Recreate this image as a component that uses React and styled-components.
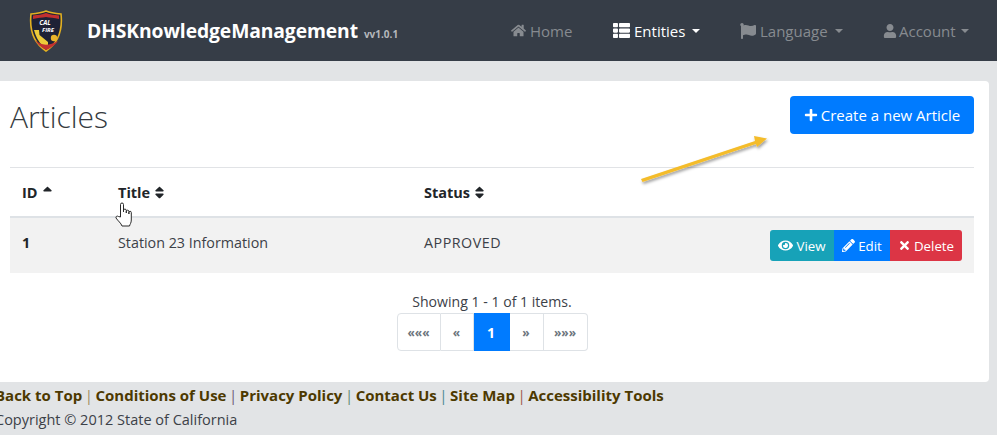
import React from 'react';
import styled, { createGlobalStyle } from 'styled-components';
import { FaHome, FaThList, FaFlag, FaUser, FaPlus, FaEye, FaPencilAlt, FaTimes, FaSort, FaSortUp } from 'react-icons/fa';

const GlobalStyle = createGlobalStyle`
  html, body {
    margin: 0;
    padding: 0;
    width: 997px;
    height: 435px;
    overflow: hidden;
    background: #e2e4e6;
    font-family: "Open Sans", "Noto Sans", sans-serif;
    font-size: 14px;
    color: #212529;
  }
  svg { display: block; }
`;

const Navbar = styled.nav`
  height: 61px;
  background: #363d47;
  display: flex;
  align-items: center;
  padding-left: 29px;
`;

const Brand = styled.div`
  display: flex;
  align-items: center;
  gap: 24px;
  color: #fff;
`;

const BrandName = styled.span`
  font-size: 19.3px;
  font-weight: 700;
  letter-spacing: -0.1px;
`;

const Version = styled.span`
  font-size: 10px;
  font-weight: 700;
  letter-spacing: 0;
  color: #b5b8bc;
  margin-left: 6px;
`;

const NavLinks = styled.div`
  margin-left: auto;
  display: flex;
  align-items: center;
`;

const NavLink = styled.a`
  display: flex;
  align-items: center;
  gap: ${p => p.$gap || 4}px;
  width: ${p => p.$width}px;
  font-size: 15px;
  color: ${p => (p.$active ? '#fff' : '#878b90')};
`;

const Caret = styled.span`
  width: 0;
  height: 0;
  margin-left: 3px;
  border-top: 4px solid currentColor;
  border-left: 4px solid transparent;
  border-right: 4px solid transparent;
`;

const Main = styled.main`
  margin: 20px 8px 0 -10px;
  height: 301px;
  box-sizing: border-box;
  background: #fff;
  border-radius: 4px;
  padding: 15px 15px 0 20px;
  position: relative;
`;

const Header = styled.div`
  display: flex;
  justify-content: space-between;
  align-items: flex-start;
  height: 71px;
  border-bottom: 1px solid #e1e3e6;
`;

const Title = styled.h2`
  margin: 2px 0 0;
  font-size: 30px;
  font-weight: 300;
  line-height: 38px;
  color: #343a40;
`;

const CreateButton = styled.button`
  height: 38px;
  width: 184px;
  display: flex;
  align-items: center;
  justify-content: center;
  gap: 3px;
  border: 0;
  border-radius: 4px;
  background: #007bff;
  color: #fff;
  font-family: inherit;
  font-size: 15px;
`;

const Table = styled.div`
  font-size: 14.3px;
`;

const Row = styled.div`
  display: grid;
  grid-template-columns: 96px 306px 1fr;
  align-items: center;
  padding-left: 12px;
  height: ${p => (p.$head ? 48 : 55)}px;
  background: ${p => (p.$head ? '#fff' : '#f2f2f2')};
  border-bottom: ${p => (p.$head ? '2px solid #dee2e6' : '0')};
`;

const HeadCell = styled.div`
  display: flex;
  align-items: center;
  gap: 2px;
  font-weight: 700;
  font-size: 14.5px;
`;

const Cell = styled.div`
  padding-bottom: 6px;
  font-weight: ${p => (p.$bold ? 700 : 400)};
  letter-spacing: ${p => (p.$caps ? '0.5px' : '0')};
  color: ${p => (p.$bold ? '#212529' : '#3c4148')};
`;

const RowEnd = styled.div`
  display: flex;
  align-items: center;
  justify-content: space-between;
  padding-right: 12px;
`;

const ButtonGroup = styled.div`
  display: flex;
  border-radius: 3px;
  overflow: hidden;
`;

const SmallButton = styled.button`
  height: 31px;
  width: ${p => p.$width}px;
  display: flex;
  align-items: center;
  justify-content: center;
  gap: 3px;
  border: 0;
  padding: 0;
  background: ${p => p.$bg};
  color: #fff;
  font-family: inherit;
  font-size: 13.3px;
`;

const Showing = styled.div`
  margin-top: 18px;
  text-align: center;
  font-size: 14.1px;
  line-height: 22px;
  color: #3c4148;
`;

const Pagination = styled.div`
  display: flex;
  justify-content: center;
`;

const PageItem = styled.a`
  box-sizing: border-box;
  height: 38px;
  width: ${p => p.$width}px;
  display: flex;
  align-items: center;
  justify-content: center;
  font-size: ${p => (p.$active ? 14 : 12)}px;
  font-weight: 700;
  color: ${p => (p.$active ? '#fff' : '#6c757d')};
  background: ${p => (p.$active ? '#007bff' : '#fff')};
  border: 1px solid ${p => (p.$active ? '#007bff' : '#dee2e6')};
  border-left-width: ${p => (p.$first ? 1 : 0)}px;
  border-radius: ${p => (p.$first ? '4px 0 0 4px' : p.$last ? '0 4px 4px 0' : '0')};
`;

const Arrow = styled.svg`
  position: absolute;
  left: 648px;
  top: 50px;
`;

const Pointer = styled.svg`
  position: absolute;
  left: 125px;
  top: 121px;
`;

const Footer = styled.footer`
  margin-left: -5px;
  padding-top: 1px;
  font-size: 15px;
  line-height: 24px;
  color: #3c4148;
`;

const FooterLinks = styled.div`
  display: flex;
  gap: 2.5px;
`;

const FooterLink = styled.a`
  font-weight: 700;
  color: #4d3900;
`;

const Separator = styled.span`
  color: ${p => p.$color};
  font-weight: 400;
`;

const Copyright = styled.div`
  margin-top: 1px;
  font-size: 14.5px;
  font-weight: 400;
`;

function Logo() {
  return (
    <svg width="34" height="42" viewBox="0 0 34 42">
      <path d="M17 1 C22 3 27 3.5 32 4 C33.5 18 31 32 17 41 C3 32 0.5 18 2 4 C7 3.5 12 3 17 1 Z" fill="#1e2236" stroke="#e2b021" strokeWidth="1.6" />
      <path d="M4 5.5 C9 5 13 4.5 17 3 C21 4.5 25 5 30 5.5 L30 9 C25 8 21 7.5 17 7 C13 7.5 9 8 4 9 Z" fill="#c2302f" />
      <path d="M5 20 L10 20 L10.5 25 L19 32 L19 36 L14 36 C9 31 7 27 5 20 Z" fill="#eccb3a" />
      <path d="M6 30 C12 36 20 36 29 31 C27 34 22 38 17 40 C12 37 8 34 6 30 Z" fill="#c2302f" />
      <circle cx="25" cy="28" r="3.2" fill="#ecb52b" />
      <text x="16" y="15" textAnchor="middle" fontSize="6.5" fontWeight="700" fontStyle="italic" fill="#fff">CAL</text>
      <text x="19" y="21.5" textAnchor="middle" fontSize="6" fontWeight="700" fontStyle="italic" fill="#fff">FIRE</text>
    </svg>
  );
}

const pages = [
  { label: '«««', width: 44, first: true },
  { label: '«', width: 33 },
  { label: '1', width: 36, active: true },
  { label: '»', width: 34 },
  { label: '»»»', width: 44, last: true },
];

const footerLinks = ['Back to Top', 'Conditions of Use', 'Privacy Policy', 'Contact Us', 'Site Map', 'Accessibility Tools'];
const separatorColors = ['#a08c5a', '#6c5a78', '#5f8a70', '#4b8a94', '#a05a50'];

function App() {
  return (
    <>
      <GlobalStyle />
      <Navbar>
        <Brand>
          <Logo />
          <BrandName>
            DHSKnowledgeManagement<Version>vv1.0.1</Version>
          </BrandName>
        </Brand>
        <NavLinks>
          <NavLink $width={102}><FaHome size={15} /> Home</NavLink>
          <NavLink $width={127} $active><FaThList size={17} /> Entities <Caret /></NavLink>
          <NavLink $width={143}><FaFlag size={16} /> Language <Caret /></NavLink>
          <NavLink $width={114} $gap={2}><FaUser size={14} /> Account <Caret /></NavLink>
        </NavLinks>
      </Navbar>

      <Main>
        <Header>
          <Title>Articles</Title>
          <CreateButton><FaPlus size={14} /> Create a new Article</CreateButton>
        </Header>
        <Table>
          <Row $head>
            <HeadCell>ID <FaSortUp size={15} /></HeadCell>
            <HeadCell>Title <FaSort size={15} /></HeadCell>
            <HeadCell>Status <FaSort size={15} /></HeadCell>
          </Row>
          <Row>
            <Cell $bold>1</Cell>
            <Cell>Station 23 Information</Cell>
            <RowEnd>
              <Cell $caps>APPROVED</Cell>
              <ButtonGroup>
                <SmallButton $bg="#17a2b8" $width={64}><FaEye size={15} /> View</SmallButton>
                <SmallButton $bg="#007bff" $width={56}><FaPencilAlt size={13} /> Edit</SmallButton>
                <SmallButton $bg="#dc3545" $width={72}><FaTimes size={13} /> Delete</SmallButton>
              </ButtonGroup>
            </RowEnd>
          </Row>
        </Table>
        <Showing>Showing 1 - 1 of 1 items.</Showing>
        <Pagination>
          {pages.map(page => (
            <PageItem key={page.label} $width={page.width} $active={page.active} $first={page.first} $last={page.last}>
              {page.label}
            </PageItem>
          ))}
        </Pagination>
        <Arrow width="136" height="60" viewBox="0 0 136 60">
          <defs>
            <filter id="arrowShadow" x="-10%" y="-30%" width="130%" height="180%">
              <feDropShadow dx="1" dy="2" stdDeviation="1.5" floodColor="#000" floodOpacity="0.4" />
            </filter>
          </defs>
          <path d="M3 48 L117 10 L116 5 L129 7.5 L119 16 L118 13 L4.5 51 Z" fill="#f4bc2a" filter="url(#arrowShadow)" />
        </Arrow>
        <Pointer width="18" height="26" viewBox="0 0 18 26">
          <path
            d="M5.5 15 V2.5 a1.5 1.5 0 0 1 3 0 V10 V8.5 a1.4 1.4 0 0 1 2.8 0 V11 V9.5 a1.3 1.3 0 0 1 2.6 0 V12 V10.5 a1.2 1.2 0 0 1 2.4 0 V18 C16.3 21 15 22 14.5 24 H7 C6 21 3 19 1 16 C0.5 14.5 2 13.5 3.5 14.5 Z"
            fill="#fff"
            stroke="#2b2b2b"
            strokeWidth="1"
            strokeLinejoin="round"
          />
        </Pointer>
      </Main>

      <Footer>
        <FooterLinks>
          {footerLinks.map((link, i) => (
            <React.Fragment key={link}>
              {i > 0 && <Separator $color={separatorColors[i - 1]}>|</Separator>}
              <FooterLink>{link}</FooterLink>
            </React.Fragment>
          ))}
        </FooterLinks>
        <Copyright>Copyright © 2012 State of California</Copyright>
      </Footer>
    </>
  );
}

export default App;
